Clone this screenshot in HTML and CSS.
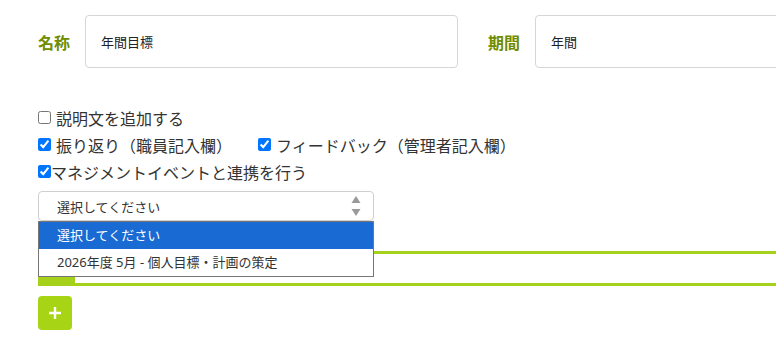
FILE: index.html
```html
<!DOCTYPE html>
<html lang="ja">
<head>
<meta charset="utf-8">
<link rel="stylesheet" href="styles.css">
</head>
<body>
<div class="page">
  <div class="top-row">
    <span class="field-label">名称</span>
    <div class="text-box">年間目標</div>
    <span class="field-label second">期間</span>
    <div class="text-box">年間</div>
  </div>

  <div class="options">
    <div class="opt-row">
      <label class="check"><input type="checkbox"><span>説明文を追加する</span></label>
    </div>
    <div class="opt-row">
      <label class="check"><input type="checkbox" checked><span>振り返り（職員記入欄）</span></label>
      <label class="check second"><input type="checkbox" checked><span>フィードバック（管理者記入欄）</span></label>
    </div>
    <div class="opt-row">
      <label class="check tight"><input type="checkbox" checked><span>マネジメントイベントと連携を行う</span></label>
    </div>
  </div>

  <div class="select-wrap">
    <div class="select-box">
      <span>選択してください</span>
      <svg class="spin" width="10" height="22" viewBox="0 0 10 22"><path d="M5 1 L9.5 8 H0.5 Z" fill="#9a9a9a"/><path d="M5 21 L9.5 14 H0.5 Z" fill="#9a9a9a"/></svg>
    </div>
    <div class="dropdown">
      <div class="dd-item active">選択してください</div>
      <div class="dd-item">2026年度 5月 - 個人目標・計画の策定</div>
    </div>
  </div>

  <div class="tabs">
    <div class="tab-active"></div>
  </div>

  <button class="add-btn" type="button">
    <svg width="14" height="14" viewBox="0 0 14 14"><path d="M7 1 V13 M1 7 H13" stroke="#fff" stroke-width="2.4"/></svg>
  </button>
</div>
</body>
</html>
```

FILE: styles.css
```css
html, body {
  margin: 0;
  padding: 0;
  background: #fff;
  overflow: hidden;
}
body {
  font-family: "Noto Sans", "Noto Sans CJK JP", sans-serif;
  color: #333;
}
.page {
  padding: 15px 0 0 38px;
  width: 1000px;
}
.top-row {
  display: flex;
  align-items: center;
  height: 53px;
}
.field-label {
  font-size: 16px;
  font-weight: bold;
  color: #6f8d00;
  width: 32px;
  margin-right: 15px;
  white-space: nowrap;
}
.field-label.second {
  margin-left: 30px;
  margin-right: 15px;
}
.text-box {
  box-sizing: border-box;
  width: 373px;
  height: 53px;
  border: 1px solid #d6d6d6;
  border-radius: 4px;
  padding: 0 15px;
  display: flex;
  align-items: center;
  font-size: 13px;
  color: #222;
}
.options {
  margin-top: 36px;
}
.opt-row {
  display: flex;
  align-items: center;
  height: 27px;
}
.check {
  display: flex;
  align-items: center;
  font-size: 16px;
  color: #333;
  white-space: nowrap;
}
.check input {
  width: 13px;
  height: 13px;
  margin: 0 5px 0 0;
}
.check.tight input {
  margin-right: 0;
}
.check.second {
  margin-left: 26px;
}
.select-wrap {
  position: relative;
  width: 336px;
  margin-top: 6px;
}
.select-box {
  box-sizing: border-box;
  height: 30px;
  border: 1px solid #cfcfcf;
  border-radius: 4px;
  display: flex;
  align-items: center;
  justify-content: space-between;
  padding: 0 12px 0 18px;
  font-size: 13px;
  color: #333;
}
.spin {
  display: block;
}
.dropdown {
  position: absolute;
  left: 0;
  top: 30px;
  width: 336px;
  box-sizing: border-box;
  border: 1px solid #767676;
  background: #fff;
  z-index: 2;
}
.dd-item {
  height: 27px;
  line-height: 27px;
  padding-left: 18px;
  font-size: 13px;
  color: #333;
}
.dd-item.active {
  background: #1a6ad4;
  color: #fff;
}
.tabs {
  margin-top: 30px;
  height: 29px;
  border-top: 3px solid #a5d11a;
  border-bottom: 3px solid #a5d11a;
  display: flex;
}
.tab-active {
  width: 37px;
  background: #a5d11a;
}
.add-btn {
  margin-top: 10px;
  width: 34px;
  height: 34px;
  border: 0;
  border-radius: 4px;
  background: #a7d515;
  display: flex;
  align-items: center;
  justify-content: center;
  padding: 0;
}
```
